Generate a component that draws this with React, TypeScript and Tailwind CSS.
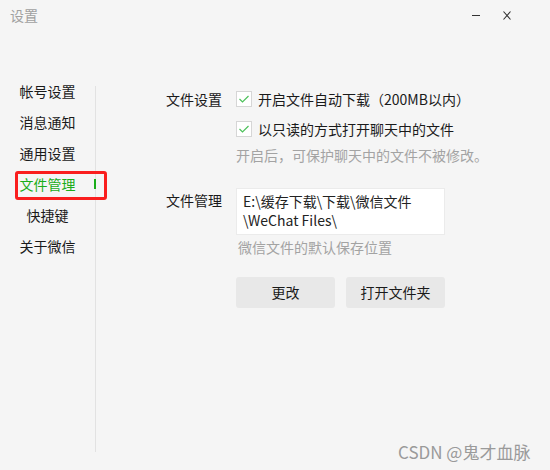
import React from 'react';

const FONT = "font-['Microsoft_YaHei','Noto_Sans_CJK_SC',sans-serif]";

const navItems = ['帐号设置', '消息通知', '通用设置', '文件管理', '快捷键', '关于微信'];

function CheckBox() {
  return (
    <div className="w-[16px] h-[16px] bg-white border border-[#d6d6d6] flex items-center justify-center shrink-0">
      <svg width="12" height="10" viewBox="0 0 12 10" fill="none">
        <polyline points="1.5,5 4.5,8 10.5,2" stroke="#4cc15a" strokeWidth="1.2" />
      </svg>
    </div>
  );
}

export default function App() {
  return (
    <div className={`relative w-[550px] h-[470px] bg-[#f5f5f5] text-[14px] text-[#1a1a1a] overflow-hidden ${FONT}`}>
      {/* title bar */}
      <div className="h-[30px] flex items-center justify-between pl-[10px] pr-[39px]">
        <span className="text-[14px] text-[#a0a0a0] leading-none">设置</span>
        <div className="flex items-center gap-[23px] text-[#333]">
          <svg width="8" height="9" viewBox="0 0 8 9">
            <line x1="0" y1="4.5" x2="8" y2="4.5" stroke="#333" strokeWidth="1" />
          </svg>
          <svg width="8" height="9" viewBox="0 0 8 9">
            <path d="M0.5 0.5 L7.5 8.5 M7.5 0.5 L0.5 8.5" stroke="#333" strokeWidth="1.1" />
          </svg>
        </div>
      </div>

      <div className="flex">
        {/* sidebar */}
        <div className="flex mt-[46px]">
          <ul className="w-[95px] flex flex-col">
            {navItems.map((item) => {
              const active = item === '文件管理';
              return (
                <li
                  key={item}
                  className={`relative h-[31px] flex items-center justify-center ${active ? 'text-[#1aad19]' : 'text-[#1a1a1a]'}`}
                >
                  {item}
                  {active && <span className="absolute left-[94px] top-[10px] w-[2px] h-[10px] bg-[#1aad19]" />}
                </li>
              );
            })}
          </ul>
          <div className="mt-[10px] w-px h-[366px] bg-[#e2e2e2]" />
        </div>

        {/* content */}
        <div className="ml-[70px] mt-[54px] flex flex-col">
          <div className="flex">
            <div className="w-[70px] h-[30px] flex items-center">文件设置</div>
            <div className="flex flex-col">
              <div className="h-[30px] flex items-center gap-[6px]">
                <CheckBox />
                <span>开启文件自动下载（200MB以内）</span>
              </div>
              <div className="h-[30px] flex items-center gap-[6px]">
                <CheckBox />
                <span>以只读的方式打开聊天中的文件</span>
              </div>
              <div className="h-[22px] flex items-center text-[14px] text-[#a3a3a3]">开启后，可保护聊天中的文件不被修改。</div>
            </div>
          </div>

          <div className="flex mt-[22px]">
            <div className="w-[70px] pt-[3px] leading-[19px]">文件管理</div>
            <div className="flex flex-col">
              <div className="w-[209px] h-[47px] bg-white border border-[#ebebeb] px-[6px] pt-[3px] leading-[19px] text-[#222]">
                <div>E:\缓存下载\下载\微信文件</div>
                <div>\WeChat Files\</div>
              </div>
              <div className="mt-[2px] h-[20px] flex items-center pl-[2px] text-[14px] text-[#a3a3a3]">微信文件的默认保存位置</div>
              <div className="mt-[20px] flex gap-[11px]">
                <button className="w-[99px] h-[31px] rounded-[3px] bg-[#e8e8e8] text-[#1a1a1a]">更改</button>
                <button className="w-[99px] h-[31px] rounded-[3px] bg-[#e8e8e8] text-[#1a1a1a]">打开文件夹</button>
              </div>
            </div>
          </div>
        </div>
      </div>

      {/* annotation */}
      <div className="absolute left-[15px] top-[171px] w-[92px] h-[29px] border-[3px] border-[#fa1e1e] rounded-[3px]" />

      {/* watermark */}
      <div className="absolute left-[398px] top-[441px] text-[17px] text-[#9a9a9a] leading-[22px] font-['Microsoft_YaHei','Noto_Sans_CJK_SC',sans-serif]">
        CSDN @鬼才血脉
      </div>
    </div>
  );
}
